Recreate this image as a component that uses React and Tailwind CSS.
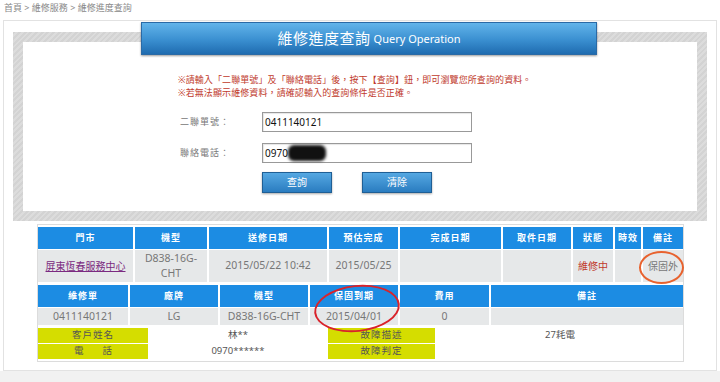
import React from "react";

export default function App() {
  const h1 = ["門市", "機型", "送修日期", "預估完成", "完成日期", "取件日期", "狀態", "時效", "備註"];
  const h2 = ["維修單", "廠牌", "機型", "保固到期", "費用", "備註"];
  return (
    <div className="w-[720px] h-[382px] bg-white overflow-hidden flex flex-col font-['Noto_Sans','Noto_Sans_CJK_TC',sans-serif]">
      <div className="h-[20px] pl-[4px] pt-[1px] text-[9px] leading-[14px] text-[#888]">首頁 &gt; 維修服務 &gt; 維修進度查詢</div>
      <div className="mx-[3px] h-[351px] border border-[#e2e2e2] bg-white flex flex-col">
        <div className="relative mt-[11px] mx-[9px] p-[10px] bg-[repeating-linear-gradient(135deg,#d3d3d3_0px,#d3d3d3_2px,#dcdcdc_2px,#dcdcdc_4px)]">
          <div className="absolute left-[128px] top-[-10px] w-[456px] h-[33px] border border-[#2a6aa6] bg-[linear-gradient(#62b4ea,#3a8fd0_55%,#1f6cb0)] shadow-[0_1px_2px_rgba(0,0,0,0.4)] flex items-center justify-center text-white">
            <span className="text-[15px] tracking-[0.5px]">維修進度查詢</span>
            <span className="text-[11px] ml-[3px] mt-[2px]">Query Operation</span>
          </div>
          <div className="bg-white h-[169px] pl-[155px] pt-[31px] flex flex-col">
            <div className="text-[9px] leading-[13px] text-[#c0392b] tracking-[0.1px]">
              <div>※請輸入「二聯單號」及「聯絡電話」後，按下【查詢】鈕，即可瀏覽您所查詢的資料。</div>
              <div>※若無法顯示維修資料，請確認輸入的查詢條件是否正確。</div>
            </div>
            <div className="flex items-center mt-[13px]">
              <div className="w-[84px] pl-[2px] text-[9px] text-[#777] tracking-[1px]">二聯單號：</div>
              <div className="w-[210px] h-[20px] border border-[#999] shadow-[inset_1px_1px_1px_rgba(0,0,0,0.1)] flex items-center pl-[2px] text-[10px] text-[#111]">0411140121</div>
            </div>
            <div className="flex items-center mt-[11px]">
              <div className="w-[84px] pl-[2px] text-[9px] text-[#777] tracking-[1px]">聯絡電話：</div>
              <div className="relative w-[210px] h-[20px] border border-[#999] shadow-[inset_1px_1px_1px_rgba(0,0,0,0.1)] flex items-center pl-[2px] text-[10px] text-[#111]">
                0970
                <div className="absolute left-[25px] top-[1px] w-[38px] h-[16px] bg-[#111] rounded-[6px] blur-[1.5px]"></div>
              </div>
            </div>
            <div className="flex mt-[9px] ml-[84px] gap-[30px]">
              <div className="w-[70px] h-[21px] border border-[#1f5f95] bg-[linear-gradient(#55a8e2,#2a7cc0)] shadow-[0_1px_2px_rgba(0,0,0,0.35)] flex items-center justify-center text-white text-[10px]">查詢</div>
              <div className="w-[70px] h-[21px] border border-[#1f5f95] bg-[linear-gradient(#55a8e2,#2a7cc0)] shadow-[0_1px_2px_rgba(0,0,0,0.35)] flex items-center justify-center text-white text-[10px]">清除</div>
            </div>
          </div>
        </div>
        <div className="relative mt-[3px] ml-[33px] w-[647px] h-[138px] border border-[#dcdcdc] pt-[2px]">
          <div className="grid grid-cols-[95px_72px_118px_69px_101px_68px_40px_26px_40px] gap-x-[2px] gap-y-[1px] text-[10.5px]">
            {h1.map((h, i) => (
              <div key={i} className="h-[22px] bg-[#1c8ce3] text-white font-bold text-[9px] tracking-[1px] flex items-center justify-center">{h}</div>
            ))}
            <div className="h-[32px] bg-[#e6e8e9] flex items-center justify-center text-[#7b2a80] underline text-[10px]">屏東恆春服務中心</div>
            <div className="h-[32px] bg-[#e6e8e9] flex items-center justify-center text-center text-[#777] leading-[15px]">D838-16G-<br />CHT</div>
            <div className="h-[32px] bg-[#e6e8e9] flex items-center justify-center text-[#777]">2015/05/22 10:42</div>
            <div className="h-[32px] bg-[#e6e8e9] flex items-center justify-center text-[#777]">2015/05/25</div>
            <div className="h-[32px] bg-[#e6e8e9]"></div>
            <div className="h-[32px] bg-[#e6e8e9]"></div>
            <div className="h-[32px] bg-[#e6e8e9] flex items-center justify-center text-[#c0392b] text-[10px]">維修中</div>
            <div className="h-[32px] bg-[#e6e8e9]"></div>
            <div className="h-[32px] bg-[#e6e8e9] flex items-center justify-center text-[#777] text-[10px]">保固外</div>
          </div>
          <div className="grid grid-cols-[90px_88px_88px_88px_89px_192px] gap-x-[2px] gap-y-[1px] mt-[3px] text-[10.5px] text-[#777]">
            {h2.map((h, i) => (
              <div key={i} className="h-[22px] bg-[#1c8ce3] text-white font-bold text-[9px] tracking-[1px] flex items-center justify-center">{h}</div>
            ))}
            <div className="h-[17px] bg-[#e6e8e9] flex items-center justify-center">0411140121</div>
            <div className="h-[17px] bg-[#e6e8e9] flex items-center justify-center">LG</div>
            <div className="h-[17px] bg-[#e6e8e9] flex items-center justify-center">D838-16G-CHT</div>
            <div className="h-[17px] bg-[#e6e8e9] flex items-center justify-center">2015/04/01</div>
            <div className="h-[17px] bg-[#e6e8e9] flex items-center justify-center">0</div>
            <div className="h-[17px] bg-[#e6e8e9]"></div>
          </div>
          <div className="grid grid-cols-[110px_176px_107px_246px] gap-x-[2px] gap-y-[1px] mt-[3px] text-[9.5px] text-[#555]">
            <div className="h-[15px] bg-[#d5dd00] flex items-center justify-center tracking-[1px]">客戶姓名</div>
            <div className="h-[15px] flex items-center justify-center">林**</div>
            <div className="h-[15px] bg-[#d5dd00] flex items-center justify-center tracking-[1px]">故障描述</div>
            <div className="h-[15px] flex items-center justify-center">27耗電</div>
            <div className="h-[15px] bg-[#d5dd00] flex items-center justify-center">電　　話</div>
            <div className="h-[15px] flex items-center justify-center">0970******</div>
            <div className="h-[15px] bg-[#d5dd00] flex items-center justify-center tracking-[1px]">故障判定</div>
            <div className="h-[15px]"></div>
          </div>
          <div className="absolute left-[601px] top-[26px] w-[45px] h-[33px] rounded-[50%] border-2 border-[#e8622e]"></div>
          <div className="absolute left-[276px] top-[60px] w-[86px] h-[47px] rounded-[50%] border-2 border-[#d9232b] rotate-[-6deg]"></div>
        </div>
      </div>
      <div className="flex-1 bg-[#f1f1f1]"></div>
    </div>
  );
}
